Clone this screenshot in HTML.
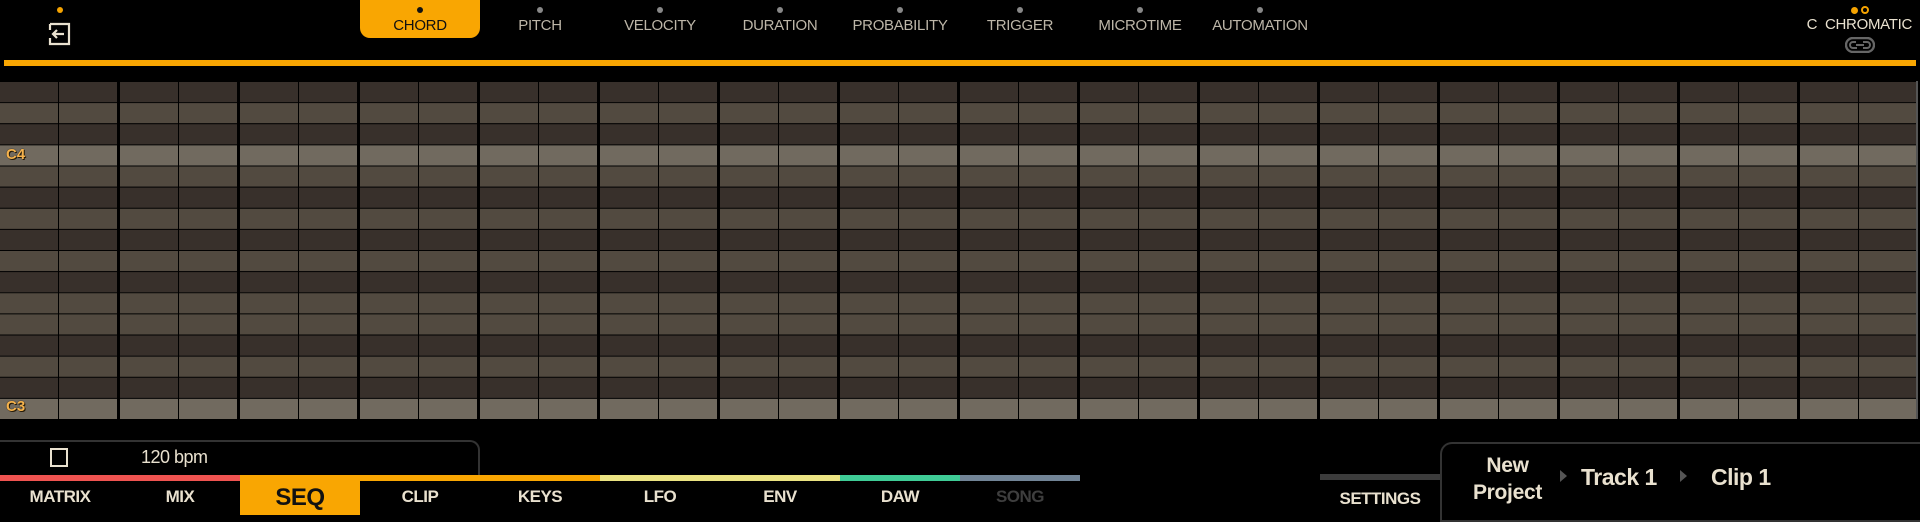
<!DOCTYPE html>
<html><head><meta charset="utf-8"><style>
*{margin:0;padding:0;box-sizing:border-box}
body{width:1920px;height:515px;background:#000;overflow:hidden;position:relative;font-family:"Liberation Sans",sans-serif;color:#e9e1cf}
.a{position:absolute}
.tab{position:absolute;top:0;width:120px;height:38px;text-align:center;font-size:15px;color:#bdb6a8;padding-top:17px;letter-spacing:-0.3px}
.tab .d{position:absolute;left:57px;top:7px;width:6px;height:6px;border-radius:50%;background:#888}
.bt{position:absolute;top:480px;width:120px;height:35px;text-align:center;font-size:17px;font-weight:bold;padding-top:7px;color:#e9e1cf;letter-spacing:-0.5px}
.cl{position:absolute;top:475px;height:6px}
</style></head><body>
<div class="a" style="left:57px;top:7px;width:6px;height:6px;border-radius:50%;background:#f5a300"></div>
<svg class="a" style="left:47px;top:21px" width="26" height="26" viewBox="0 0 26 26" fill="none" stroke="#e9e1cf" stroke-width="2.2"><path d="M3 3H22V23H3V17M3 9V3"/><path d="M17 13H6M10 9L6 13L10 17"/></svg>
<div class="tab" style="left:360px;background:#f9a602;color:#111;border-radius:0 0 10px 10px"><span class="d" style="background:#111"></span>CHORD</div>
<div class="tab" style="left:480px"><span class="d"></span>PITCH</div>
<div class="tab" style="left:600px"><span class="d"></span>VELOCITY</div>
<div class="tab" style="left:720px"><span class="d"></span>DURATION</div>
<div class="tab" style="left:840px"><span class="d"></span>PROBABILITY</div>
<div class="tab" style="left:960px"><span class="d"></span>TRIGGER</div>
<div class="tab" style="left:1080px"><span class="d"></span>MICROTIME</div>
<div class="tab" style="left:1200px"><span class="d"></span>AUTOMATION</div>
<div class="a" style="left:1851px;top:7px;width:7px;height:7px;border-radius:50%;background:#f5a300"></div>
<div class="a" style="left:1861px;top:6px;width:8px;height:8px;border-radius:50%;border:2px solid #f5a300"></div>
<div class="a" style="right:8px;top:16px;font-size:15px;color:#e9e1cf;word-spacing:4px;letter-spacing:-0.3px">C CHROMATIC</div>
<svg class="a" style="left:1845px;top:37px" width="30" height="16" viewBox="0 0 30 16"><rect x="1" y="1" width="28" height="14" rx="7" fill="none" stroke="#666" stroke-width="2.4"/><path d="M11 5H8a3 3 0 0 0 0 6h4M18 5h4a3 3 0 0 1 0 6h-4M11 8h8" stroke="#666" stroke-width="2" fill="none"/></svg>
<div class="a" style="left:4px;top:60px;width:1912px;height:6px;background:#f9a602"></div>
<div class="a" style="left:0;top:81px;width:1917px;height:338px;background:
linear-gradient(90deg,transparent 0 58px,#000 58px 59px,transparent 59px 117px,#000 117px 120px) 0 0/120px 100%,
linear-gradient(#000 0 1px,transparent 1px) 0 0/100% 21.125px,
linear-gradient(#38302b 0 21.1px,#524a40 21.1px 42.2px,#38302b 42.2px 63.4px,#716a5f 63.4px 84.5px,#524a40 84.5px 105.6px,#38302b 105.6px 126.8px,#524a40 126.8px 147.9px,#38302b 147.9px 169px,#524a40 169px 190.1px,#38302b 190.1px 211.2px,#524a40 211.2px 232.4px,#524a40 232.4px 253.5px,#38302b 253.5px 274.6px,#524a40 274.6px 295.8px,#38302b 295.8px 316.9px,#716a5f 316.9px 338px)"></div>
<div class="a" style="left:1916px;top:81px;width:2px;height:338px;background:#555"></div>
<div class="a" style="left:6px;top:146px;font-size:15px;font-weight:bold;color:#f5b24c;text-shadow:0 0 1px #000,1px 1px 0 #2a1e0a">C4</div>
<div class="a" style="left:6px;top:398px;font-size:15px;font-weight:bold;color:#f5b24c;text-shadow:0 0 1px #000,1px 1px 0 #2a1e0a">C3</div>
<div class="a" style="left:-2px;top:440px;width:482px;height:40px;border:2px solid #333;border-bottom:none;border-left:none;border-radius:0 10px 0 0"></div>
<div class="a" style="left:50px;top:448px;width:18px;height:19px;border:2.5px solid #e9e1cf"></div>
<div class="a" style="left:141px;top:447px;font-size:18px;letter-spacing:-0.5px">120 bpm</div>
<div class="cl" style="left:0;width:240px;background:#ef5350"></div>
<div class="cl" style="left:240px;width:360px;background:#f9a602"></div>
<div class="cl" style="left:600px;width:240px;background:#ebe382"></div>
<div class="cl" style="left:840px;width:120px;background:#3fcb96"></div>
<div class="cl" style="left:960px;width:120px;background:#718496"></div>
<div class="bt" style="left:0">MATRIX</div>
<div class="bt" style="left:120px">MIX</div>
<div class="bt" style="left:240px;background:#f9a602;color:#111;font-size:24px;padding-top:4px">SEQ</div>
<div class="bt" style="left:360px">CLIP</div>
<div class="bt" style="left:480px">KEYS</div>
<div class="bt" style="left:600px">LFO</div>
<div class="bt" style="left:720px">ENV</div>
<div class="bt" style="left:840px">DAW</div>
<div class="bt" style="left:960px;color:#3e3e3e">SONG</div>
<div class="a" style="left:1320px;top:474px;width:120px;height:6px;background:#3c3c3c"></div>
<div class="bt" style="left:1320px;top:482px">SETTINGS</div>
<div class="a" style="left:1440px;top:442px;width:490px;height:80px;border:2px solid #333;border-right:none;border-radius:12px 0 0 0"></div>
<div class="a" style="left:1450px;top:452px;width:115px;text-align:center;font-size:21px;font-weight:bold;line-height:27px;letter-spacing:-0.3px">New<br>Project</div>
<div class="a" style="left:1560px;top:470px;width:0;height:0;border-left:7px solid #555;border-top:6px solid transparent;border-bottom:6px solid transparent"></div>
<div class="a" style="left:1581px;top:464px;font-size:23px;font-weight:bold;letter-spacing:-0.5px">Track 1</div>
<div class="a" style="left:1680px;top:470px;width:0;height:0;border-left:7px solid #555;border-top:6px solid transparent;border-bottom:6px solid transparent"></div>
<div class="a" style="left:1711px;top:464px;font-size:23px;font-weight:bold;letter-spacing:-0.5px">Clip 1</div>
</body></html>
